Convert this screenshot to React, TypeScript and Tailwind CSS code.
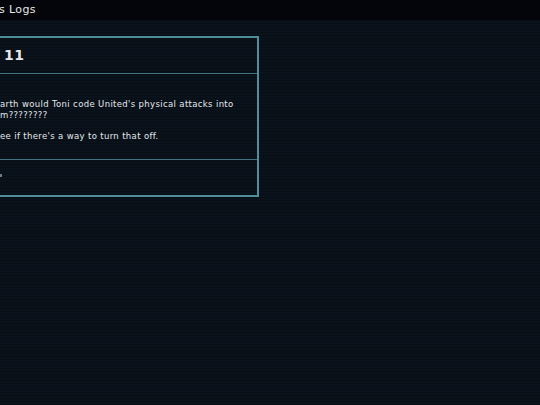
export default function App() {
  return (
    <div className="h-[405px] w-[540px] overflow-hidden bg-[#09111a] bg-[image:repeating-linear-gradient(to_bottom,#0a131c_0px,#0a131c_2px,#070e16_2px,#070e16_3px)] font-['DejaVu_Sans',sans-serif] text-[#e6e8ea]">
      <header className="flex h-[20px] items-center bg-[#04050b] text-[11px] tracking-[0.4px]">
        <span className="-ml-[1px]">s Logs</span>
      </header>

      <section className="-ml-[10px] mt-[16px] w-[269px] border-2 border-[#4f8e99]">
        <div className="flex h-[36px] items-center border-b border-[#3f7480] pl-[12px]">
          <h2 className="text-[14px] font-bold tracking-[0.5px]">11</h2>
        </div>
        <div className="flex h-[85px] flex-col pl-[8px] pt-[25px] text-[8.5px] leading-[11px] tracking-[0.35px]">
          <p>arth would Toni code United's physical attacks into</p>
          <p>m????????</p>
          <p className="mt-[10px]">ee if there's a way to turn that off.</p>
        </div>
        <div className="flex h-[36px] items-center border-t border-[#3f7480] pl-[8px]">
          <span className="-mt-[4px] h-[3px] w-[2px] bg-[#6b7a84]" />
        </div>
      </section>
    </div>
  );
}
